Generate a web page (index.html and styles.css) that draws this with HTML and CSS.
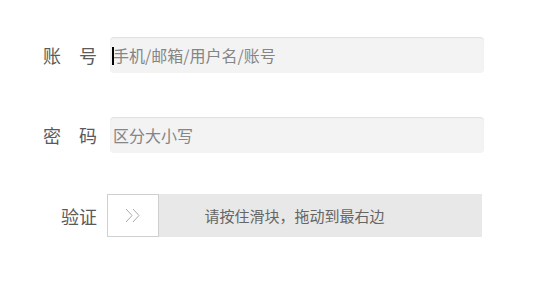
FILE: index.html
```html
<!DOCTYPE html>
<html lang="zh">
<head>
<meta charset="utf-8">
<link rel="stylesheet" href="styles.css">
</head>
<body>
<form class="login">
  <div class="row row-account">
    <label class="label" for="acc">账　号</label>
    <div class="field">
      <input id="acc" class="input" type="text" placeholder="手机/邮箱/用户名/账号">
      <span class="caret"></span>
    </div>
  </div>
  <div class="row row-password">
    <label class="label" for="pwd">密　码</label>
    <div class="field">
      <input id="pwd" class="input" type="password" placeholder="区分大小写">
    </div>
  </div>
  <div class="row row-verify">
    <span class="label">验证</span>
    <div class="slider">
      <div class="handle">
        <svg width="18" height="15" viewBox="0 0 18 15" aria-hidden="true">
          <polyline points="1,1 7,7.5 1,14" fill="none" stroke="#aaaaaa" stroke-width="1"/>
          <polyline points="8,1 14,7.5 8,14" fill="none" stroke="#aaaaaa" stroke-width="1"/>
        </svg>
      </div>
      <span class="slider-text">请按住滑块，拖动到最右边</span>
    </div>
  </div>
</form>
</body>
</html>
```
FILE: styles.css
```css
html, body {
  margin: 0;
  padding: 0;
  background: #ffffff;
}
body {
  font-family: "Noto Sans CJK SC", "Noto Sans", sans-serif;
  width: 558px;
  height: 283px;
  overflow: hidden;
}
.login {
  display: flex;
  flex-direction: column;
  padding-top: 37px;
}
.row {
  display: flex;
  align-items: center;
}
.row-password {
  margin-top: 44px;
}
.row-verify {
  margin-top: 41px;
}
.label {
  flex: none;
  width: 110px;
  padding-right: 13px;
  box-sizing: border-box;
  text-align: right;
  font-size: 18px;
  font-weight: 400;
  line-height: 24px;
  color: #5a5a5a;
}
.field {
  position: relative;
  width: 374px;
  height: 36px;
}
.input {
  width: 100%;
  height: 100%;
  box-sizing: border-box;
  border: none;
  border-radius: 4px;
  background: #f3f3f3;
  box-shadow: inset 0 1px 1px rgba(0,0,0,0.08);
  padding: 0 0 0 3px;
  font-family: "Noto Sans CJK SC", "Noto Sans", sans-serif;
  font-size: 16px;
  font-weight: 400;
  color: #333333;
  outline: none;
}
.input::placeholder {
  color: #858585;
}
.caret {
  position: absolute;
  left: 2px;
  top: 10px;
  width: 2px;
  height: 18px;
  background: #000000;
}
.slider {
  position: relative;
  margin-left: -3px;
  width: 375px;
  height: 43px;
  background: #e8e8e8;
  display: flex;
  align-items: stretch;
}
.handle {
  flex: none;
  width: 52px;
  box-sizing: border-box;
  border: 1px solid #cfcfcf;
  background: #ffffff;
  display: flex;
  align-items: center;
  justify-content: center;
  padding-left: 2px;
}
.slider-text {
  position: absolute;
  left: 0;
  right: 0;
  top: 0;
  bottom: 0;
  display: flex;
  align-items: center;
  justify-content: center;
  font-size: 15px;
  font-weight: 400;
  color: #666666;
  pointer-events: none;
}
```
